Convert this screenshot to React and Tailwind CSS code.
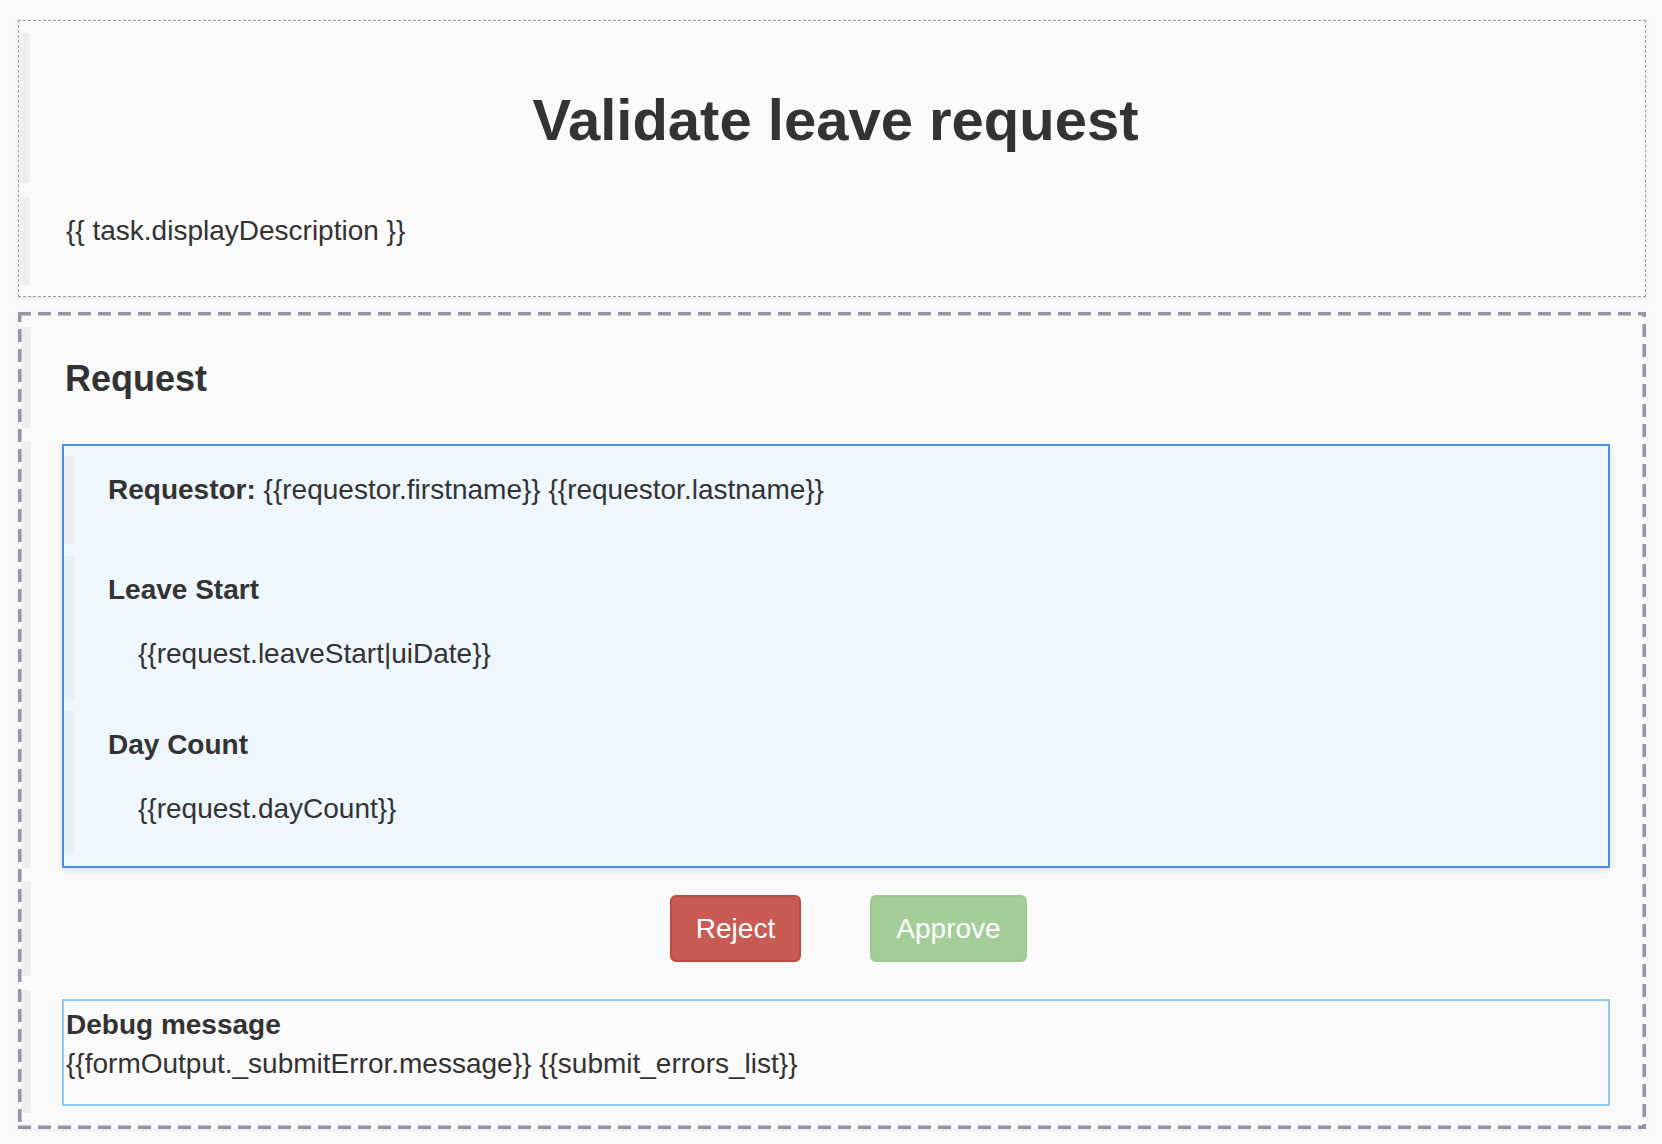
const font = { fontFamily: '"Liberation Sans", Arial, sans-serif' };

const Stripe = ({ className = "" }) => (
  <div className={`w-[10px] shrink-0 self-stretch rounded-[2px] bg-[#eeeeee] ${className}`} />
);

const Section = ({ className = "", stripe = "", children }) => (
  <div className={`flex ${className}`}>
    <Stripe className={stripe} />
    <div className="min-w-0 flex-1">{children}</div>
  </div>
);

// thick dashed frame, drawn so the dash rhythm matches the editor's outline
const DashedFrame = () => (
  <svg className="pointer-events-none absolute inset-0 h-full w-full">
    <rect
      x="0"
      y="0"
      width="100%"
      height="100%"
      fill="none"
      stroke="#9593a4"
      strokeWidth="7"
      strokeDasharray="13 7"
    />
  </svg>
);

function FieldBlue({ label, value }) {
  return (
    <div className="mt-[12px] flex h-[143px]">
      <div className="w-[10px] shrink-0 rounded-[2px] bg-[#e9eef3]" />
      <div className="pl-[34px] pt-[16px]">
        <p className="font-bold leading-[36px]">{label}</p>
        <p className="mt-[28px] pl-[30px] leading-[36px]">{value}</p>
      </div>
    </div>
  );
}

export default function App() {
  return (
    <div
      className="min-h-[1144px] w-full bg-[#f9f9f9] pl-[18px] pr-[16px] pt-[20px] text-[28px] text-[#333333]"
      style={font}
    >
      {/* header card */}
      <div className="border border-dashed border-[#9b99a8] bg-[#fafafa] pb-[11px] pl-px pt-[12px] shadow-[0_1px_4px_rgba(0,0,0,0.08)]">
        <Section className="h-[150px]">
          <h1 className="pr-[4px] pt-[52px] text-center text-[58px] font-bold leading-[70px]">
            Validate leave request
          </h1>
        </Section>
        <Section className="mt-[14px] h-[88px]">
          <p className="pl-[36px] pt-[16px] leading-[36px]">{"{{ task.displayDescription }}"}</p>
        </Section>
      </div>

      {/* request card */}
      <div className="relative mt-[15px] bg-[#fafafa] pb-[16px] pl-[3px] pr-[3px] pt-[15px] shadow-[0_1px_4px_rgba(0,0,0,0.08)]">
        <DashedFrame />
        <Section className="h-[101px]">
          <h2 className="pl-[34px] pt-[30px] text-[36px] font-bold leading-[44px]">Request</h2>
        </Section>

        <Section className="mt-[14px] h-[426px]">
          <div className="ml-[31px] mr-[33px] mt-[2px] h-[424px] border-2 border-[#4a8fe9] bg-[#eef6fe] shadow-[0_2px_6px_rgba(0,0,0,0.12)]">
            <div className="flex flex-col pt-[10px]">
              <Section className="h-[88px]" stripe="bg-[#e9eef3]">
                <p className="pl-[34px] pt-[16px] leading-[36px]">
                  <span className="font-bold">Requestor:</span>{" "}
                  {"{{requestor.firstname}} {{requestor.lastname}}"}
                </p>
              </Section>
              <FieldBlue label="Leave Start" value="{{request.leaveStart|uiDate}}" />
              <FieldBlue label="Day Count" value="{{request.dayCount}}" />
            </div>
          </div>
        </Section>

        <Section className="mt-[14px] h-[94px]">
          <div className="flex justify-center gap-[69px] pl-[23px] pt-[13px]">
            <button className="h-[67px] w-[131px] rounded-[6px] border-2 border-[#c04a44] bg-[#c95b55] text-[28px] text-white">
              Reject
            </button>
            <button className="h-[67px] w-[157px] rounded-[6px] border-2 border-[#9ec793] bg-[#a5cd99] text-[28px] text-white">
              Approve
            </button>
          </div>
        </Section>

        <Section className="mt-[14px] h-[123px]">
          <div className="ml-[31px] mr-[33px] mt-[9px] h-[107px] border-2 border-[#90caf4] bg-[#fafafa] pl-[2px] pt-[4px] leading-[39px]">
            <p className="font-bold">Debug message</p>
            <p>{"{{formOutput._submitError.message}} {{submit_errors_list}}"}</p>
          </div>
        </Section>
      </div>
    </div>
  );
}
